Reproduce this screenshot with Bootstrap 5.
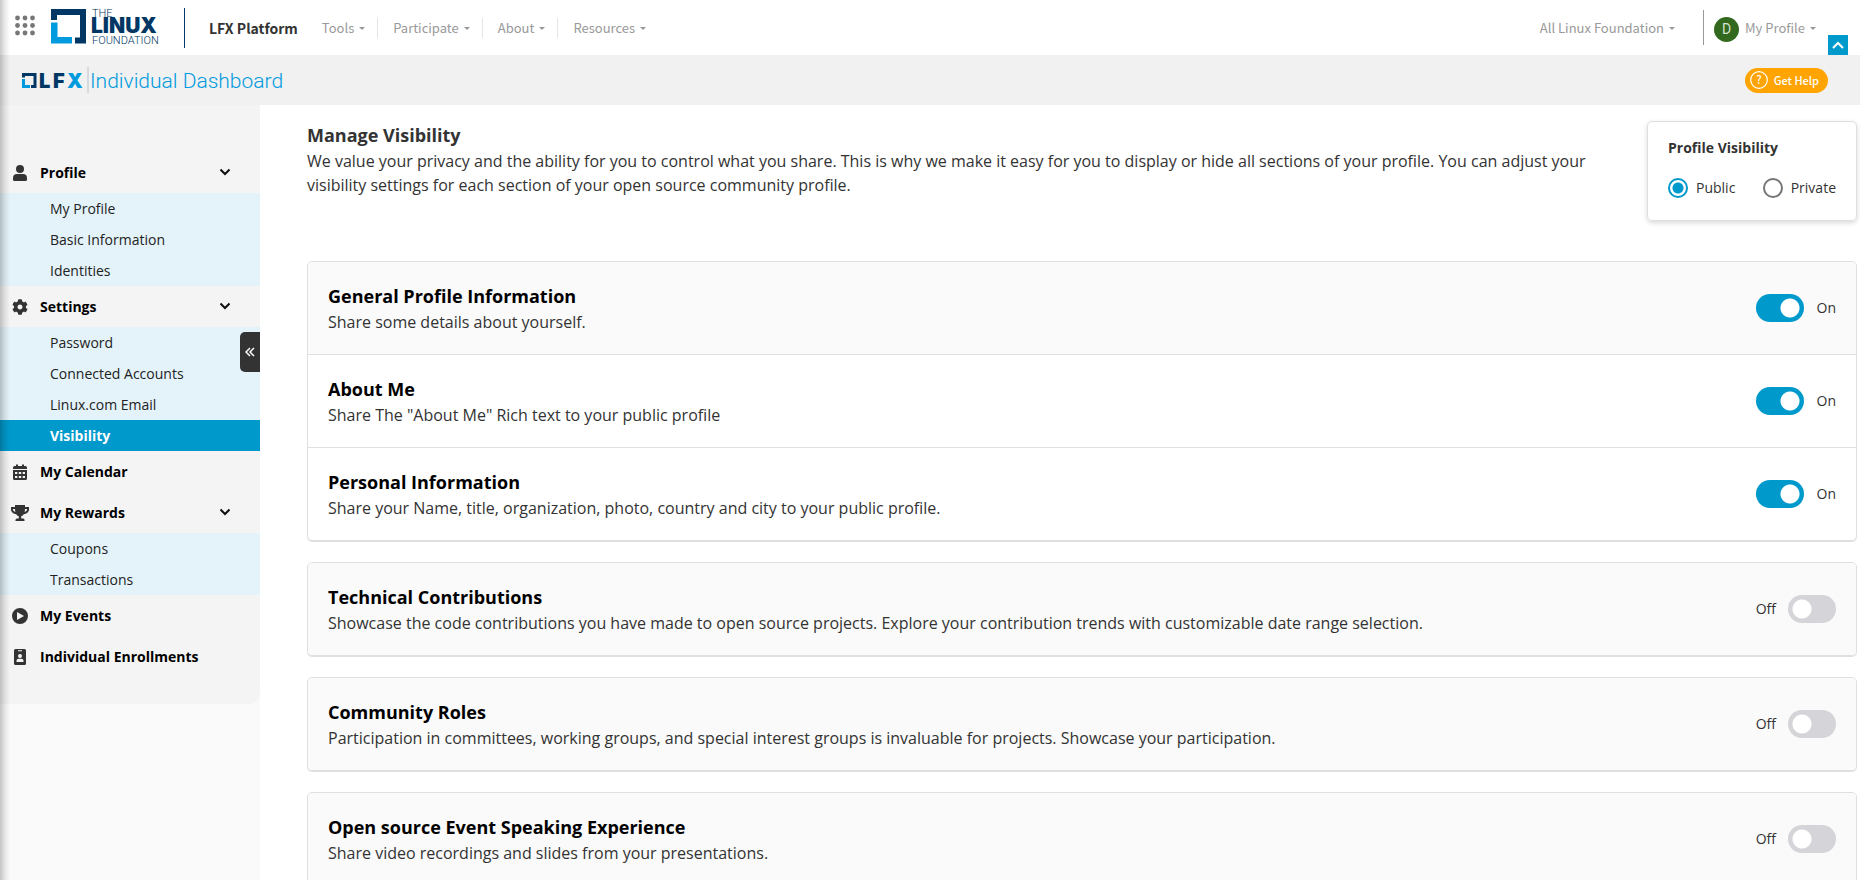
<!DOCTYPE html>
<html lang="en">
<head>
<meta charset="utf-8">
<meta name="viewport" content="width=device-width, initial-scale=1">
<title>Individual Dashboard</title>
<link href="https://cdn.jsdelivr.net/npm/bootstrap@5.3.0/dist/css/bootstrap.min.css" rel="stylesheet">
<style>
:root { --lfx-blue: #0099cc; --lfx-navy: #003764; --lfx-sky: #009ade; --line: #dfdfdf; }
body { font-family: "Open Sans", sans-serif; font-size: 16px; line-height: 24px; color: #333; background: #fff; height: 100vh; overflow: hidden; }
.edge-shade { position: fixed; inset: 0 auto 0 0; width: 10px; background: linear-gradient(90deg, rgba(0,0,0,.22), rgba(0,0,0,.08) 50%, transparent); z-index: 10; pointer-events: none; }
.top-bar { height: 55px; font-family: "Noto Sans CJK SC", sans-serif; font-size: 13px; line-height: 20px; }
.top-bar button { border: 0; background: none; padding: 0; color: #999; white-space: nowrap; }
.top-bar .dropdown-toggle::after { border-top: 3px solid; border-left: 3px solid transparent; border-right: 3px solid transparent; margin-left: 5px; vertical-align: 3px; }
.apps-btn { margin: 0 15px; }
.brand-name { font-size: 14px; font-weight: 700; color: #333; }
.rule-navy { width: 1px; height: 40px; background: var(--lfx-navy); }
.rule-grey { width: 1px; height: 35px; background: #999; margin-left: 28px; }
.menu li + li { border-left: 1px solid #e5e5e5; padding-left: 15px; }
.menu li { padding-right: 12px; }
.avatar { width: 25px; height: 25px; border-radius: 50%; background: #33691e; color: #d5e3cf; font: 14px/25px Roboto, sans-serif; text-align: center; margin: 4px 6px 0 10px; }
.top-bar .to-top { width: 20px; height: 20px; background: var(--lfx-blue); margin: 0 12px; }
.sub-bar { height: 50px; background: #f1f1f1; padding: 0 32px 0 20px; }
.help-btn { height: 25px; width: 83px; border: 0; border-radius: 13px; background: #ffa400; color: #fff; font: 500 11px/16px "Noto Sans CJK SC", sans-serif; padding: 0 5px; }
.help-btn span { white-space: nowrap; }
.side { width: 260px; background: #fafafa; }
.side-menu { background: #f4f4f4; padding: 47px 0 27px; border-bottom-right-radius: 10px; font-size: 14px; }
.side-head { height: 41px; padding: 0 30px 0 10px; color: #000; font-weight: 700; text-decoration: none; display: flex; align-items: center; gap: 10px; width: 100%; border: 0; background: none; text-align: left; }
.side-head svg { flex: none; fill: #333; }
.side-sub { background: #e4f3f9; }
.side-sub a { display: block; height: 31px; line-height: 31px; padding-left: 50px; color: #222; text-decoration: none; }
.side-sub a.active { background: var(--lfx-blue); color: #fff; font-weight: 700; }
.collapse-tab { position: absolute; right: 0; top: 227px; width: 20px; height: 40px; border: 0; background: #333; border-radius: 5px 0 0 5px; padding: 0; }
.page { padding: 16px 3px 0 47px; }
.page h1, .page h2 { font-size: 18px; line-height: 28px; font-weight: 700; margin: 0; }
.page h2 { color: #000; }
.intro { max-width: 1300px; }
.vis-card { width: 210px; height: 100px; border: 1px solid var(--line); border-radius: 5px; box-shadow: 0 2px 5px rgba(0,0,0,.15); padding: 14px 20px; font-size: 14px; margin-bottom: 40px; }
.vis-card input { appearance: none; width: 20px; height: 20px; margin: 0; border: 2px solid #757575; border-radius: 50%; flex: none; }
.vis-card input:checked { border-color: var(--lfx-blue); background: radial-gradient(circle, var(--lfx-blue) 5px, transparent 6px); }
.vis-card label { display: flex; align-items: center; gap: 8px; }
.panel { border: 1px solid var(--line); border-radius: 5px; box-shadow: 0 1px 0 var(--line); margin-bottom: 21px; overflow: clip; }
.setting { padding: 20px; }
.setting + .setting { border-top: 1px solid var(--line); }
.setting.lead-row { background: #fafafa; }
.switcher { display: flex; align-items: center; gap: 13px; font-size: 14px; flex: none; }
.switcher.off { flex-direction: row-reverse; gap: 12px; }
.switcher input { appearance: none; margin: 0; width: 48px; height: 28px; border-radius: 14px; background: radial-gradient(circle at 14px 14px, #fff 9px, transparent 10px) #d4d4d9; }
.switcher input:checked { background: radial-gradient(circle at 34px 14px, #fff 9px, transparent 10px) var(--lfx-blue); }
</style>
</head>
<body class="d-flex flex-column">
<div class="edge-shade"></div>
<header class="top-bar d-flex align-items-center flex-shrink-0">
  <button aria-label="Apps" class="apps-btn d-flex"><svg width="20" height="26" viewBox="0 0 20 26" fill="#777"><circle cx="2.500" cy="3" r="2.400"/><circle cx="10" cy="3" r="2.400"/><circle cx="17.500" cy="3" r="2.400"/><circle cx="2.500" cy="10.500" r="2.400"/><circle cx="10" cy="10.500" r="2.400"/><circle cx="17.500" cy="10.500" r="2.400"/><circle cx="2.500" cy="18" r="2.400"/><circle cx="10" cy="18" r="2.400"/><circle cx="17.500" cy="18" r="2.400"/></svg></button>
  <a href="#" aria-label="The Linux Foundation" class="d-flex"><svg width="110" height="41" viewBox="50 7 110 41">
    <path d="M51 9h35v34.500H75v-6h5V15H57v5h-6z" fill="#003764"/><path d="M51 22.500h6.500V37H72v6.500H51z" fill="#009ade"/>
    <g fill="#003764"><text x="92" y="17" font-family="Roboto" font-weight="300" font-size="11">THE</text><text x="91" y="33" font-family="Inter" font-weight="900" font-size="21">LINUX</text><text x="92" y="44" font-family="Roboto" font-weight="300" font-size="11">FOUNDATION</text></g>
  </svg></a>
  <div class="rule-navy mx-4"></div>
  <span class="brand-name me-4">LFX Platform</span>
  <ul class="menu list-unstyled d-flex mb-0">
    <li><button class="dropdown-toggle">Tools</button></li><li><button class="dropdown-toggle">Participate</button></li><li><button class="dropdown-toggle">About</button></li><li><button class="dropdown-toggle">Resources</button></li>
  </ul>
  <button class="dropdown-toggle ms-auto">All Linux Foundation</button>
  <div class="rule-grey"></div>
  <span class="avatar">D</span>
  <button class="dropdown-toggle">My Profile</button>
  <button class="to-top align-self-end d-flex align-items-center justify-content-center" aria-label="Back to top"><svg width="12" height="8" viewBox="0 0 12 8" fill="none" stroke="#fff" stroke-width="2"><path d="M1 7l5-5 5 5"/></svg></button>
</header>
<div class="sub-bar d-flex align-items-center justify-content-between flex-shrink-0">
  <a href="#" class="d-flex" aria-label="LFX Individual Dashboard"><svg width="270" height="30" viewBox="20 66 270 30">
    <path d="M22 74h14.500v15H31v-3h2.500v-9h-8.500v1.500H22z" fill="#003764"/><path d="M22 80h3v6h5v3h-8z" fill="#009ade"/>
    <text y="89" font-family="Inter" font-weight="900" font-size="20" fill="#003764"><tspan x="39">L</tspan><tspan x="53">F</tspan><tspan x="67" fill="#009ade">X</tspan></text>
    <path d="M88 68v26" stroke="#b8c4cc"/><text x="90" y="89" font-family="Roboto" font-weight="300" font-size="21" fill="#009ade">Individual Dashboard</text>
  </svg></a>
  <button class="help-btn d-flex align-items-center justify-content-between"><svg width="18" height="18" viewBox="0 0 18 18"><circle cx="9" cy="9" r="8.300" fill="none" stroke="#fff" stroke-width="1.200"/><text x="9" y="13" font-size="11" text-anchor="middle" fill="#fff">?</text></svg><span class="me-1">Get Help</span></button>
</div>
<div class="d-flex flex-grow-1 align-items-stretch">
  <nav class="side position-relative flex-shrink-0">
    <div class="side-menu">
      <button class="side-head"><svg width="20" height="16" viewBox="-3 0 20 16"><circle cx="7" cy="4" r="4"/><path d="M0 14.500V13a4 4 0 0 1 4-4h6a4 4 0 0 1 4 4v1.500a1.500 1.500 0 0 1-1.500 1.500h-11A1.500 1.500 0 0 1 0 14.500z"/></svg><span class="flex-grow-1">Profile</span><svg width="10" height="20" viewBox="0 0 10 20"><path d="M.5 6.500L5 11l4.500-4.500" fill="none" stroke="#111" stroke-width="2"/></svg></button>
      <div class="side-sub"><a href="#">My Profile</a><a href="#">Basic Information</a><a href="#">Identities</a></div>
      <button class="side-head"><svg width="20" height="16" viewBox="-46 0 604 512"><path d="M487.400 315.700l-42.600-24.600c4.300-23.200 4.300-47 0-70.200l42.600-24.600c4.900-2.800 7.100-8.600 5.500-14-11.100-35.600-30-67.800-54.700-94.600-3.800-4.100-10-5.100-14.800-2.300L380.800 110c-17.900-15.400-38.500-27.300-60.800-35.100V25.800c0-5.600-3.900-10.500-9.400-11.700-36.700-8.200-74.300-7.800-109.200 0-5.500 1.200-9.400 6.100-9.400 11.700V75c-22.200 7.900-42.800 19.800-60.800 35.100L88.700 85.500c-4.900-2.800-11-1.900-14.800 2.300-24.700 26.700-43.600 58.900-54.700 94.600-1.700 5.400.6 11.200 5.500 14L67.300 221c-4.300 23.200-4.300 47 0 70.200l-42.600 24.600c-4.900 2.800-7.100 8.600-5.500 14 11.100 35.600 30 67.800 54.700 94.600 3.800 4.100 10 5.100 14.800 2.300l42.600-24.600c17.900 15.400 38.500 27.300 60.800 35.100v49.200c0 5.600 3.900 10.500 9.400 11.700 36.700 8.200 74.300 7.800 109.200 0 5.500-1.200 9.400-6.100 9.400-11.700v-49.200c22.200-7.900 42.800-19.800 60.800-35.100l42.600 24.600c4.900 2.800 11 1.900 14.800-2.300 24.700-26.700 43.600-58.900 54.700-94.600 1.500-5.500-.7-11.300-5.600-14.100zM256 336c-44.100 0-80-35.900-80-80s35.900-80 80-80 80 35.900 80 80-35.900 80-80 80z"/></svg><span class="flex-grow-1">Settings</span><svg width="10" height="20" viewBox="0 0 10 20"><path d="M.5 6.500L5 11l4.500-4.500" fill="none" stroke="#111" stroke-width="2"/></svg></button>
      <div class="side-sub"><a href="#">Password</a><a href="#">Connected Accounts</a><a href="#">Linux.com Email</a><a href="#" class="active" aria-current="page">Visibility</a></div>
      <a href="#" class="side-head"><svg width="20" height="16" viewBox="-3 0 20 16"><path fill-rule="evenodd" d="M0 5V3.500A1.500 1.500 0 0 1 1.500 2H3V.5h2V2h4V.5h2V2h1.500A1.500 1.500 0 0 1 14 3.500V5zM0 6h14v8.500a1.500 1.500 0 0 1-1.500 1.500h-11A1.500 1.500 0 0 1 0 14.500zM2 8v2h2.300V8zm3.800 0v2h2.400V8zm3.900 0v2H12V8zM2 12v2h2.300v-2zm3.800 0v2h2.400v-2zm3.900 0v2H12v-2z"/></svg>My Calendar</a>
      <button class="side-head"><svg width="20" height="16" viewBox="-1 0 20 16"><path fill-rule="evenodd" d="M4 0h10v2h4v2.500c0 2.500-2.500 4.400-5.200 4.700-.8 1.300-1.800 1.900-2.600 2.100V13.500h1.800a1.500 1.500 0 0 1 1.500 1.500v1h-9v-1A1.500 1.500 0 0 1 6 13.500h1.800V11.300C7 11 6 10.400 5.200 9.200 2.500 8.900 0 7 0 4.500V2h4zM2 4v.5c0 .9 1 2 2.400 2.500A11 11 0 0 1 4 4zm12 0a11 11 0 0 1-.4 3C15 6.500 16 5.400 16 4.500V4z"/></svg><span class="flex-grow-1">My Rewards</span><svg width="10" height="20" viewBox="0 0 10 20"><path d="M.5 6.500L5 11l4.500-4.500" fill="none" stroke="#111" stroke-width="2"/></svg></button>
      <div class="side-sub"><a href="#">Coupons</a><a href="#">Transactions</a></div>
      <a href="#" class="side-head"><svg width="20" height="16" viewBox="-2 0 20 16"><path fill-rule="evenodd" d="M8 0a8 8 0 1 1 0 16A8 8 0 0 1 8 0zM5 4v8l7-4z"/></svg>My Events</a>
      <a href="#" class="side-head"><svg width="20" height="16" viewBox="-4 0 20 16"><path fill-rule="evenodd" d="M1.500 0h9A1.500 1.500 0 0 1 12 1.500v13a1.500 1.500 0 0 1-1.500 1.500h-9A1.500 1.500 0 0 1 0 14.500v-13A1.500 1.500 0 0 1 1.500 0zM4 1.200v1h4v-1zM6 5a2 2 0 1 0 0 4 2 2 0 0 0 0-4zM2.500 13h7v-1c0-1.500-1-2.300-2-2.300h-3c-1 0-2 .8-2 2.300z"/></svg>Individual Enrollments</a>
    </div>
    <button class="collapse-tab" aria-label="Collapse menu"><svg class="d-block mx-auto" width="10" height="10" viewBox="0 0 10 10" fill="none" stroke="#fff" stroke-width="1.500"><path d="M5 1L1 5l4 4M9 1L5 5l4 4"/></svg></button>
  </nav>
  <main class="page flex-grow-1">
    <div class="d-flex justify-content-between">
      <div class="intro"><h1>Manage Visibility</h1><p class="mb-0">We value your privacy and the ability for you to control what you share. This is why we make it easy for you to display or hide all sections of your profile. You can adjust your visibility settings for each section of your open source community profile.</p></div>
      <fieldset class="vis-card flex-shrink-0"><div class="fw-bold mb-3">Profile Visibility</div>
        <div class="d-flex justify-content-between"><label><input type="radio" name="vis" checked>Public</label><label><input type="radio" name="vis">Private</label></div>
      </fieldset>
    </div>
    <section class="panel">
      <div class="setting lead-row d-flex justify-content-between"><div><h2>General Profile Information</h2><div>Share some details about yourself.</div></div><label class="switcher"><input type="checkbox" role="switch" checked>On</label></div>
      <div class="setting d-flex justify-content-between"><div><h2>About Me</h2><div>Share The "About Me" Rich text to your public profile</div></div><label class="switcher"><input type="checkbox" role="switch" checked>On</label></div>
      <div class="setting d-flex justify-content-between"><div><h2>Personal Information</h2><div>Share your Name, title, organization, photo, country and city to your public profile.</div></div><label class="switcher"><input type="checkbox" role="switch" checked>On</label></div>
    </section>
    <section class="panel"><div class="setting lead-row d-flex justify-content-between"><div><h2>Technical Contributions</h2><div>Showcase the code contributions you have made to open source projects. Explore your contribution trends with customizable date range selection.</div></div><label class="switcher off"><input type="checkbox" role="switch">Off</label></div></section>
    <section class="panel"><div class="setting lead-row d-flex justify-content-between"><div><h2>Community Roles</h2><div>Participation in committees, working groups, and special interest groups is invaluable for projects. Showcase your participation.</div></div><label class="switcher off"><input type="checkbox" role="switch">Off</label></div></section>
    <section class="panel"><div class="setting lead-row d-flex justify-content-between"><div><h2>Open source Event Speaking Experience</h2><div>Share video recordings and slides from your presentations.</div></div><label class="switcher off"><input type="checkbox" role="switch">Off</label></div></section>
  </main>
</div>
<script src="https://cdn.jsdelivr.net/npm/bootstrap@5.3.0/dist/js/bootstrap.bundle.min.js"></script>
</body>
</html>
